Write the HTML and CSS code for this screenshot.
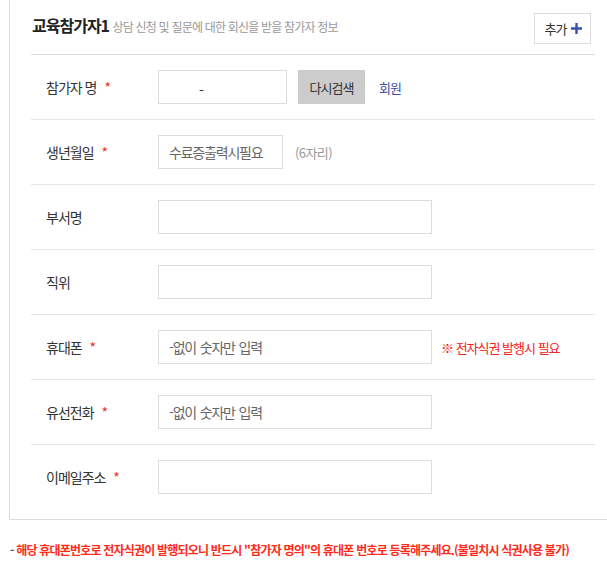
FILE: index.html
```html
<!DOCTYPE html>
<html lang="ko">
<head>
    <meta charset="UTF-8">
    <meta name="viewport" content="width=device-width, initial-scale=1.0">
    <title>교육참가자 정보</title>
    <link rel="stylesheet" href="styles.css">
</head>
<body>

    <div class="box">
        <div class="box-head">
            <h3 class="title">교육참가자1 <span class="sub">상담 신청 및 질문에 대한 회신을 받을 참가자 정보</span></h3>
            <button class="add">추가
                <svg class="plus" width="11" height="11" viewBox="0 0 11 11"><path d="M5.5 0v11M0 5.5h11" stroke="#3a50b0" stroke-width="2.4"/></svg>
            </button>
        </div>

        <div class="row">
            <label class="label">참가자 명 <em>*</em></label>
            <input type="text" class="field name" value="-">
            <button class="search">다시검색</button>
            <a href="#" class="member">회원</a>
        </div>

        <div class="row">
            <label class="label">생년월일 <em>*</em></label>
            <input type="text" class="field birth" placeholder="수료증출력시필요">
            <span class="hint">(6자리)</span>
        </div>

        <div class="row">
            <label class="label">부서명</label>
            <input type="text" class="field">
        </div>

        <div class="row">
            <label class="label">직위</label>
            <input type="text" class="field">
        </div>

        <div class="row">
            <label class="label">휴대폰 <em>*</em></label>
            <input type="text" class="field" placeholder="-없이 숫자만 입력">
            <span class="warn">※ 전자식권 발행시 필요</span>
        </div>

        <div class="row">
            <label class="label">유선전화 <em>*</em></label>
            <input type="text" class="field" placeholder="-없이 숫자만 입력">
        </div>

        <div class="row">
            <label class="label">이메일주소 <em>*</em></label>
            <input type="text" class="field">
        </div>
    </div>

    <p class="notice">- <span>해당 휴대폰번호로 전자식권이 발행되오니 반드시 "참가자 명의"의 휴대폰 번호로 등록해주세요.(불일치시 식권사용 불가)</span></p>

</body>
</html>
```

FILE: styles.css
```css
body {
    margin: 0;
    font-family: "Noto Sans CJK KR", "Noto Sans", sans-serif;
    color: #333;
    background: #fff;
}
.box {
    width: 564px;
    margin-left: 9px;
    padding: 0 21px 10px 21px;
    border: 1px solid #ddd;
    border-top: none;
}
.box-head {
    display: flex;
    justify-content: space-between;
    align-items: center;
    height: 54px;
    border-bottom: 1px solid #ddd;
}
.title {
    margin: 0 0 4px 1px;
    font-size: 16px;
    font-weight: bold;
    color: #222;
    letter-spacing: -1px;
}
.sub {
    font-size: 12px;
    font-weight: normal;
    color: #999;
    letter-spacing: -0.8px;
}
.add {
    display: flex;
    align-items: center;
    justify-content: center;
    gap: 5px;
    width: 57px;
    height: 31px;
    margin: 2px 4px 0 0;
    border: 1px solid #ddd;
    background: #fff;
    font-family: inherit;
    font-size: 13px;
    color: #333;
    letter-spacing: -1px;
    padding: 0 0 0 2px;
}
.row {
    display: flex;
    align-items: center;
    height: 64px;
    border-bottom: 1px solid #e5e5e5;
}
.row:last-child {
    border-bottom: none;
}
.label {
    width: 112px;
    padding-left: 15px;
    font-size: 14px;
    letter-spacing: -1px;
    flex-shrink: 0;
}
.label em {
    font-style: normal;
    color: #e8302a;
    margin-left: 5px;
}
.field {
    box-sizing: border-box;
    width: 274px;
    height: 34px;
    border: 1px solid #ddd;
    padding: 0 10px;
    font-family: inherit;
    font-size: 14px;
    color: #333;
    letter-spacing: -1.2px;
    word-spacing: 1px;
    outline: none;
}
.field::placeholder {
    color: #666;
}
.field.name {
    width: 129px;
    padding-left: 40px;
    padding-top: 6px;
}
.field.birth {
    width: 125px;
}
.search {
    width: 67px;
    height: 34px;
    margin-left: 11px;
    border: none;
    background: #ccc;
    font-family: inherit;
    font-size: 13px;
    color: #333;
    letter-spacing: -1px;
    padding: 0;
}
.member {
    margin-left: 14px;
    font-size: 13px;
    color: #3d4fa5;
    text-decoration: none;
    letter-spacing: -1px;
}
.hint {
    margin-left: 12px;
    font-size: 13px;
    color: #999;
    letter-spacing: -0.6px;
}
.warn {
    margin-left: 9px;
    font-size: 13px;
    color: #f52020;
    letter-spacing: -1px;
}
.notice {
    margin: 21px 0 0 10px;
    font-size: 12px;
    font-weight: bold;
    color: #555;
    letter-spacing: -0.8px;
}
.notice span {
    color: #ff2a1a;
}
```
